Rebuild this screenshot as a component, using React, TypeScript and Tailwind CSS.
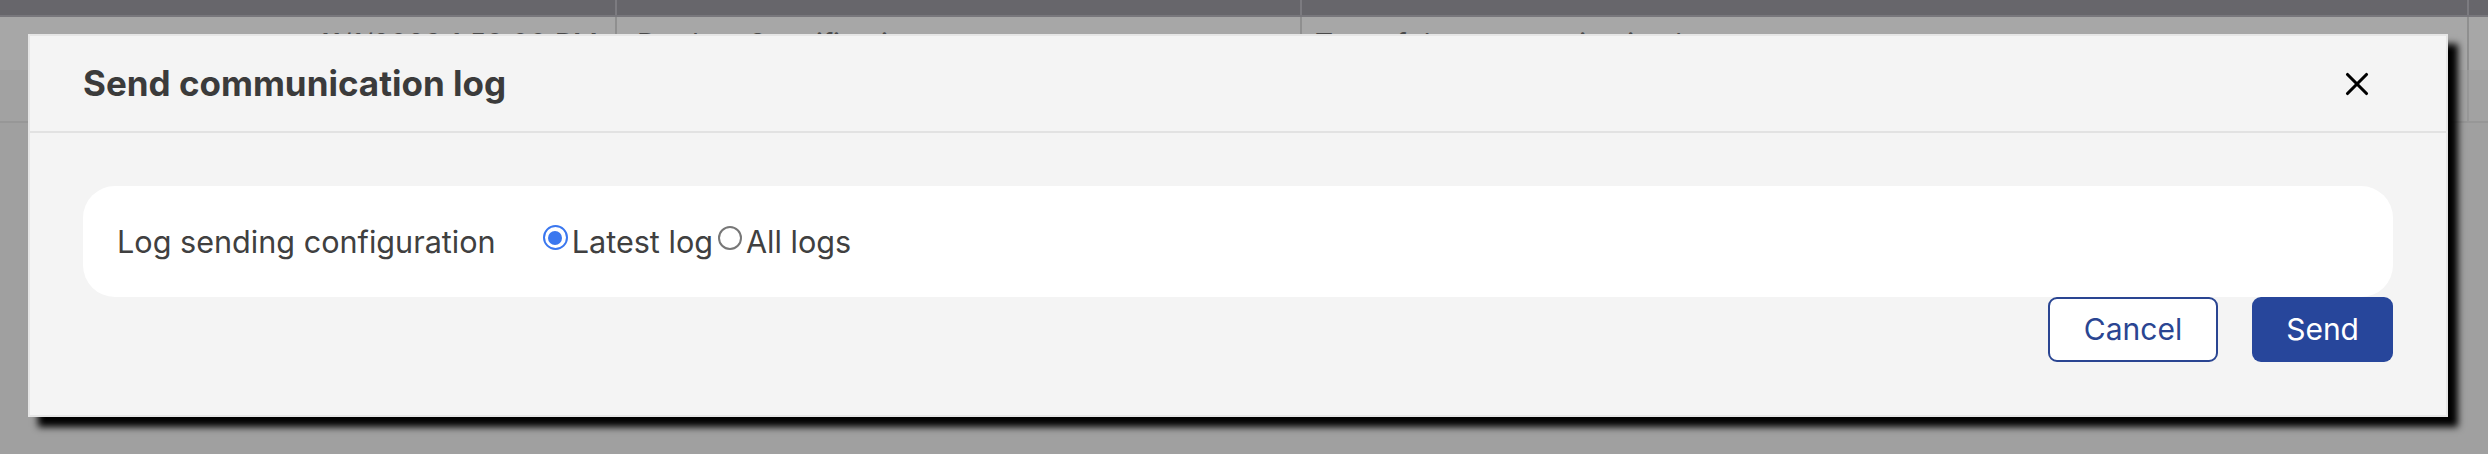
import { X } from "lucide-react";

function Radio({ checked, label }: { checked: boolean; label: string }) {
  return (
    <label className="flex items-center">
      {checked ? (
        <span className="mb-[7px] flex h-[25px] w-[25px] items-center justify-center rounded-full border-[2.5px] border-[#3a77ef] bg-white">
          <span className="h-[14px] w-[14px] rounded-full bg-[#3a77ef]"></span>
        </span>
      ) : (
        <span className="mb-[7px] ml-[5px] h-[24px] w-[24px] rounded-full border-2 border-[#777] bg-white"></span>
      )}
      <span className="ml-[4px]">{label}</span>
    </label>
  );
}

export default function App() {
  return (
    <div className="relative h-[454px] w-[2488px] overflow-hidden bg-[#a0a0a0] font-['Inter',sans-serif]">
      {/* table behind the overlay */}
      <div className="grid h-[17px] grid-cols-[617px_685px_1167px_1fr] border-b-2 border-[#78777c] bg-[#67666b]">
        <div className="border-r-2 border-[#7c7b80]"></div>
        <div className="border-r-2 border-[#7c7b80]"></div>
        <div className="border-r-2 border-[#7c7b80]"></div>
        <div></div>
      </div>
      <div className="grid h-[53px] grid-cols-[617px_685px_1167px_1fr] bg-[#a7a7a7] text-[28px] text-[#4a4a4a]">
        <div className="flex items-center justify-end border-r-2 border-[#8f8f8f] pr-[17px]">11/1/2023 1:59:00 PM</div>
        <div className="flex items-center border-r-2 border-[#8f8f8f] pl-[20px]">Product Specification</div>
        <div className="flex items-center border-r-2 border-[#8f8f8f] pl-[13px]">Text of the communication log</div>
        <div></div>
      </div>
      <div className="grid h-[53px] grid-cols-[617px_685px_1167px_1fr] border-b-2 border-[#979797] bg-[#a2a2a2]">
        <div className="border-r-2 border-[#979797]"></div>
        <div className="border-r-2 border-[#979797]"></div>
        <div className="border-r-2 border-[#979797]"></div>
        <div></div>
      </div>

      {/* modal */}
      <div className="absolute left-[28px] top-[34px] flex h-[383px] w-[2420px] flex-col border-2 border-[#e6e6e6] bg-[#f4f4f4] shadow-[10px_10px_7px_#000]">
        <div className="flex h-[97px] items-center justify-between border-b-2 border-[#e2e2e2] pl-[53px] pr-[70px]">
          <h2 className="text-[35px] font-bold text-[#3b3b3b]">Send communication log</h2>
          <button className="text-black">
            <X size={38} strokeWidth={2} />
          </button>
        </div>
        <div className="flex flex-col px-[53px] pt-[53px]">
          <div className="flex h-[111px] items-center rounded-[32px] bg-white pl-[34px] text-[30.6px] text-[#404040]">
            <span>Log sending configuration</span>
            <div className="ml-[47px] flex items-center">
              <Radio checked label="Latest log" />
              <Radio checked={false} label="All logs" />
            </div>
          </div>
          <div className="flex justify-end gap-[34px] text-[30px]">
            <button className="h-[65px] rounded-[9px] border-2 border-[#2a4592] bg-white px-[34px] text-[#2a4592]">
              Cancel
            </button>
            <button className="h-[65px] rounded-[9px] bg-[#27469b] px-[34px] text-white">Send</button>
          </div>
        </div>
      </div>
    </div>
  );
}
